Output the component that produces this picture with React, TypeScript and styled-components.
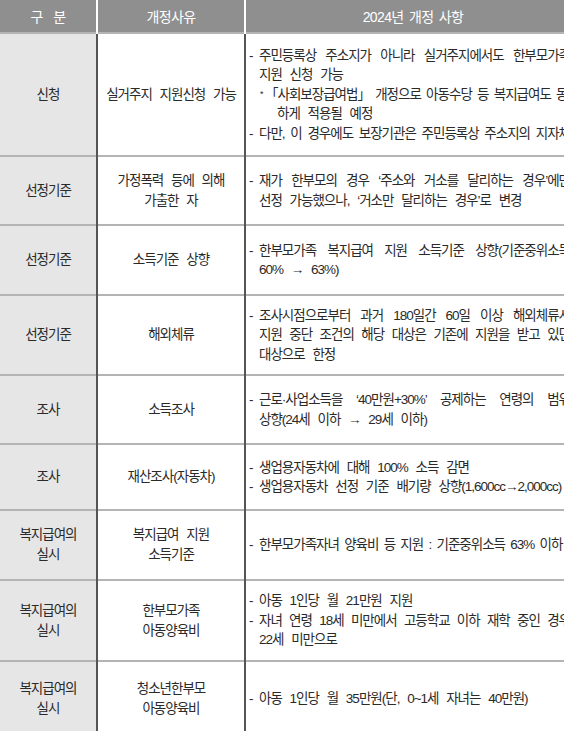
import styled, { createGlobalStyle } from 'styled-components'

type Kind = 'dash' | 'cont' | 'note' | 'noteCont'

interface Line {
  kind: Kind
  text: string
  full?: boolean
  tight?: boolean
}

interface RowData {
  height: number
  category: string[]
  reason: string[]
  lines: Line[]
}

const rows: RowData[] = [
  {
    height: 123,
    category: ['신청'],
    reason: ['실거주지 지원신청 가능'],
    lines: [
      { kind: 'dash', text: '주민등록상 주소지가 아니라 실거주지에서도 한부모가족', full: true },
      { kind: 'cont', text: '지원 신청 가능' },
      { kind: 'note', text: '「사회보장급여법」 개정으로 아동수당 등 복지급여도 동일', full: true, tight: true },
      { kind: 'noteCont', text: '하게 적용될 예정' },
      { kind: 'dash', text: '다만, 이 경우에도 보장기관은 주민등록상 주소지의 지자체', full: true, tight: true },
    ],
  },
  {
    height: 69,
    category: ['선정기준'],
    reason: ['가정폭력 등에 의해', '가출한 자'],
    lines: [
      { kind: 'dash', text: '재가 한부모의 경우 ‘주소와 거소를 달리하는 경우’에만', full: true, tight: true },
      { kind: 'cont', text: '선정 가능했으나, ‘거소만 달리하는 경우’로 변경' },
    ],
  },
  {
    height: 70,
    category: ['선정기준'],
    reason: ['소득기준 상향'],
    lines: [
      { kind: 'dash', text: '한부모가족 복지급여 지원 소득기준 상향(기준중위소득', full: true },
      { kind: 'cont', text: '60% → 63%)' },
    ],
  },
  {
    height: 80,
    category: ['선정기준'],
    reason: ['해외체류'],
    lines: [
      { kind: 'dash', text: '조사시점으로부터 과거 180일간 60일 이상 해외체류시', full: true },
      { kind: 'cont', text: '지원 중단 조건의 해당 대상은 기존에 지원을 받고 있던', full: true, tight: true },
      { kind: 'cont', text: '대상으로 한정' },
    ],
  },
  {
    height: 69,
    category: ['조사'],
    reason: ['소득조사'],
    lines: [
      { kind: 'dash', text: '근로·사업소득을 ‘40만원+30%’ 공제하는 연령의 범위', full: true },
      { kind: 'cont', text: '상향(24세 이하 → 29세 이하)' },
    ],
  },
  {
    height: 66,
    category: ['조사'],
    reason: ['재산조사(자동차)'],
    lines: [
      { kind: 'dash', text: '생업용자동차에 대해 100% 소득 감면' },
      { kind: 'dash', text: '생업용자동차 선정 기준 배기량 상향(1,600cc→2,000cc)' },
    ],
  },
  {
    height: 70,
    category: ['복지급여의', '실시'],
    reason: ['복지급여 지원', '소득기준'],
    lines: [{ kind: 'dash', text: '한부모가족자녀 양육비 등 지원 : 기준중위소득 63% 이하', tight: true }],
  },
  {
    height: 81,
    category: ['복지급여의', '실시'],
    reason: ['한부모가족', '아동양육비'],
    lines: [
      { kind: 'dash', text: '아동 1인당 월 21만원 지원' },
      { kind: 'dash', text: '자녀 연령 18세 미만에서 고등학교 이하 재학 중인 경우', full: true, tight: true },
      { kind: 'cont', text: '22세 미만으로' },
    ],
  },
  {
    height: 74,
    category: ['복지급여의', '실시'],
    reason: ['청소년한부모', '아동양육비'],
    lines: [{ kind: 'dash', text: '아동 1인당 월 35만원(단, 0~1세 자녀는 40만원)' }],
  },
]

const GlobalStyle = createGlobalStyle`
  html, body {
    margin: 0;
    padding: 0;
    background: #fff;
    overflow: hidden;
  }
  body {
    font-family: 'Liberation Sans', 'Noto Sans CJK KR', sans-serif;
  }
`

const Table = styled.table`
  width: 576px;
  border-collapse: collapse;
  table-layout: fixed;
  color: #2a2a2a;
  font-size: 13.5px;
  letter-spacing: -1px;
  word-spacing: 5px;
`

const HeadCell = styled.th<{ $w: number }>`
  width: ${p => p.$w}px;
  height: 32px;
  padding: 0;
  background: #8f8f8f;
  color: #fff;
  font-weight: normal;
  font-size: 14px;
  letter-spacing: -0.6px;
  word-spacing: 2px;
  border-left: 2px solid #fff;
  border-bottom: 1px solid #e0e0e0;
  &:first-child {
    border-left: none;
  }
`

const Row = styled.tr<{ $h: number }>`
  height: ${p => p.$h}px;
`

const CategoryCell = styled.td`
  padding: 0;
  background: #e6e6e6;
  text-align: center;
  vertical-align: middle;
  line-height: 20px;
  border-top: 2px solid #b4b4b4;
`

const ReasonCell = styled.td`
  padding: 0;
  text-align: center;
  vertical-align: middle;
  line-height: 20px;
  border-top: 2px solid #b4b4b4;
  border-left: 2px solid #555;
`

const DetailCell = styled.td`
  padding: 0 10px 0 3px;
  vertical-align: middle;
  line-height: 19.5px;
  border-top: 2px solid #b4b4b4;
  border-left: 2px solid #555;
`

const indents: Record<Kind, number> = { dash: 0, cont: 10, note: 11, noteCont: 28 }

const LineRow = styled.div<{ $kind: Kind; $tight?: boolean }>`
  display: flex;
  padding-left: ${p => indents[p.$kind]}px;
  white-space: nowrap;
  word-spacing: ${p => (p.$tight ? 2.5 : 5)}px;
`

const Marker = styled.span`
  flex: 0 0 10px;
`

const Star = styled.span`
  flex: 0 0 5px;
  font-size: 9px;
`

const LineText = styled.span<{ $full?: boolean }>`
  flex: 1 1 auto;
  min-width: 0;
  text-align: justify;
  text-align-last: ${p => (p.$full ? 'justify' : 'left')};
`

const DetailLine = ({ line }: { line: Line }) => (
  <LineRow $kind={line.kind} $tight={line.tight}>
    {line.kind === 'dash' && <Marker>-</Marker>}
    {line.kind === 'note' && <Star>*</Star>}
    <LineText $full={line.full}>{line.text}</LineText>
  </LineRow>
)

const Stack = ({ lines }: { lines: string[] }) => (
  <>
    {lines.map((l, i) => (
      <div key={i}>{l}</div>
    ))}
  </>
)

export default function App() {
  return (
    <>
      <GlobalStyle />
      <Table>
        <thead>
          <tr>
            <HeadCell $w={96}>구&nbsp;&nbsp;분</HeadCell>
            <HeadCell $w={146}>개정사유</HeadCell>
            <HeadCell $w={334}>2024년 개정 사항</HeadCell>
          </tr>
        </thead>
        <tbody>
          {rows.map((r, i) => (
            <Row key={i} $h={r.height}>
              <CategoryCell>
                <Stack lines={r.category} />
              </CategoryCell>
              <ReasonCell>
                <Stack lines={r.reason} />
              </ReasonCell>
              <DetailCell>
                {r.lines.map((l, j) => (
                  <DetailLine key={j} line={l} />
                ))}
              </DetailCell>
            </Row>
          ))}
        </tbody>
      </Table>
    </>
  )
}
